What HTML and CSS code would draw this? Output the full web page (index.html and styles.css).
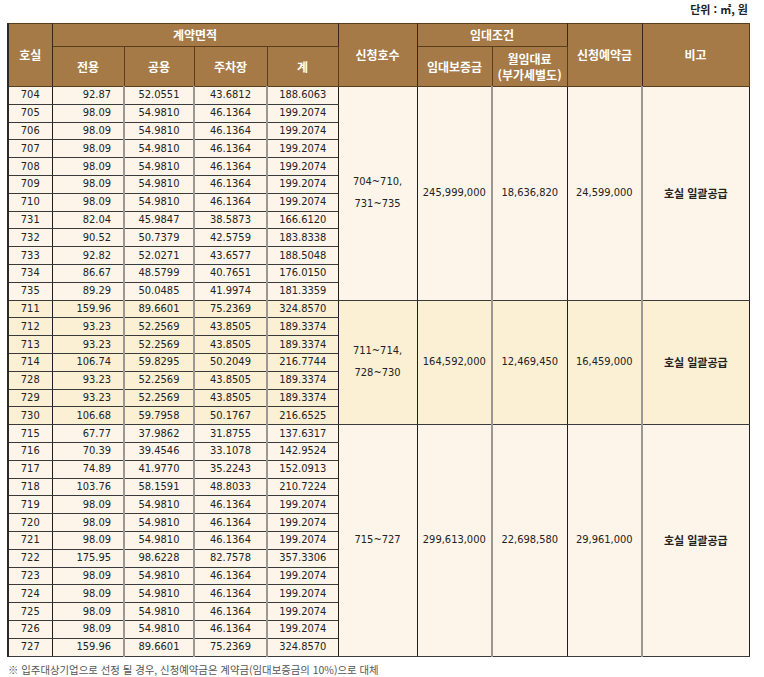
FILE: index.html
```html
<!DOCTYPE html>
<html lang="ko">
<head>
<meta charset="utf-8">
<link rel="stylesheet" href="styles.css">
</head>
<body>
<div class="page">
  <div class="unit">단위 : ㎡, 원</div>
  <table class="tbl">
    <colgroup>
      <col class="w-ho"><col class="w-a"><col class="w-b"><col class="w-c"><col class="w-d">
      <col class="w-e"><col class="w-f"><col class="w-g"><col class="w-h"><col class="w-i">
    </colgroup>
    <thead>
      <tr class="h1">
        <th rowspan="2" class="bk">호실</th>
        <th colspan="4" class="bk">계약면적</th>
        <th rowspan="2" class="bk">신청호수</th>
        <th colspan="2" class="bk">임대조건</th>
        <th rowspan="2" class="bk">신청예약금</th>
        <th rowspan="2">비고</th>
      </tr>
      <tr class="h2">
        <th>전용</th><th>공용</th><th>주차장</th><th class="bk">계</th>
        <th>임대보증금</th><th class="bk">월임대료<br>(부가세별도)</th>
      </tr>
    </thead>
    <tbody class="g1">
      <tr><td class="ho">704</td><td class="ex">92.87</td><td class="gr">52.0551</td><td class="gr">43.6812</td><td>188.6063</td>
        <td rowspan="12" class="m bk">704~710,<br>731~735</td><td rowspan="12" class="m gr">245,999,000</td><td rowspan="12" class="m bk">18,636,820</td><td rowspan="12" class="m gr">24,599,000</td><td rowspan="12" class="m note">호실 일괄공급</td></tr>
      <tr><td class="ho">705</td><td class="ex">98.09</td><td class="gr">54.9810</td><td class="gr">46.1364</td><td>199.2074</td></tr>
      <tr><td class="ho">706</td><td class="ex">98.09</td><td class="gr">54.9810</td><td class="gr">46.1364</td><td>199.2074</td></tr>
      <tr><td class="ho">707</td><td class="ex">98.09</td><td class="gr">54.9810</td><td class="gr">46.1364</td><td>199.2074</td></tr>
      <tr><td class="ho">708</td><td class="ex">98.09</td><td class="gr">54.9810</td><td class="gr">46.1364</td><td>199.2074</td></tr>
      <tr><td class="ho">709</td><td class="ex">98.09</td><td class="gr">54.9810</td><td class="gr">46.1364</td><td>199.2074</td></tr>
      <tr><td class="ho">710</td><td class="ex">98.09</td><td class="gr">54.9810</td><td class="gr">46.1364</td><td>199.2074</td></tr>
      <tr><td class="ho">731</td><td class="ex">82.04</td><td class="gr">45.9847</td><td class="gr">38.5873</td><td>166.6120</td></tr>
      <tr><td class="ho">732</td><td class="ex">90.52</td><td class="gr">50.7379</td><td class="gr">42.5759</td><td>183.8338</td></tr>
      <tr><td class="ho">733</td><td class="ex">92.82</td><td class="gr">52.0271</td><td class="gr">43.6577</td><td>188.5048</td></tr>
      <tr><td class="ho">734</td><td class="ex">86.67</td><td class="gr">48.5799</td><td class="gr">40.7651</td><td>176.0150</td></tr>
      <tr><td class="ho">735</td><td class="ex">89.29</td><td class="gr">50.0485</td><td class="gr">41.9974</td><td>181.3359</td></tr>
    </tbody>
    <tbody class="g2">
      <tr><td class="ho">711</td><td class="ex">159.96</td><td class="gr">89.6601</td><td class="gr">75.2369</td><td>324.8570</td>
        <td rowspan="7" class="m bk">711~714,<br>728~730</td><td rowspan="7" class="m gr">164,592,000</td><td rowspan="7" class="m bk">12,469,450</td><td rowspan="7" class="m gr">16,459,000</td><td rowspan="7" class="m note">호실 일괄공급</td></tr>
      <tr><td class="ho">712</td><td class="ex">93.23</td><td class="gr">52.2569</td><td class="gr">43.8505</td><td>189.3374</td></tr>
      <tr><td class="ho">713</td><td class="ex">93.23</td><td class="gr">52.2569</td><td class="gr">43.8505</td><td>189.3374</td></tr>
      <tr><td class="ho">714</td><td class="ex">106.74</td><td class="gr">59.8295</td><td class="gr">50.2049</td><td>216.7744</td></tr>
      <tr><td class="ho">728</td><td class="ex">93.23</td><td class="gr">52.2569</td><td class="gr">43.8505</td><td>189.3374</td></tr>
      <tr><td class="ho">729</td><td class="ex">93.23</td><td class="gr">52.2569</td><td class="gr">43.8505</td><td>189.3374</td></tr>
      <tr><td class="ho">730</td><td class="ex">106.68</td><td class="gr">59.7958</td><td class="gr">50.1767</td><td>216.6525</td></tr>
    </tbody>
    <tbody class="g1">
      <tr><td class="ho">715</td><td class="ex">67.77</td><td class="gr">37.9862</td><td class="gr">31.8755</td><td>137.6317</td>
        <td rowspan="13" class="m bk">715~727</td><td rowspan="13" class="m gr">299,613,000</td><td rowspan="13" class="m bk">22,698,580</td><td rowspan="13" class="m gr">29,961,000</td><td rowspan="13" class="m note">호실 일괄공급</td></tr>
      <tr><td class="ho">716</td><td class="ex">70.39</td><td class="gr">39.4546</td><td class="gr">33.1078</td><td>142.9524</td></tr>
      <tr><td class="ho">717</td><td class="ex">74.89</td><td class="gr">41.9770</td><td class="gr">35.2243</td><td>152.0913</td></tr>
      <tr><td class="ho">718</td><td class="ex">103.76</td><td class="gr">58.1591</td><td class="gr">48.8033</td><td>210.7224</td></tr>
      <tr><td class="ho">719</td><td class="ex">98.09</td><td class="gr">54.9810</td><td class="gr">46.1364</td><td>199.2074</td></tr>
      <tr><td class="ho">720</td><td class="ex">98.09</td><td class="gr">54.9810</td><td class="gr">46.1364</td><td>199.2074</td></tr>
      <tr><td class="ho">721</td><td class="ex">98.09</td><td class="gr">54.9810</td><td class="gr">46.1364</td><td>199.2074</td></tr>
      <tr><td class="ho">722</td><td class="ex">175.95</td><td class="gr">98.6228</td><td class="gr">82.7578</td><td>357.3306</td></tr>
      <tr><td class="ho">723</td><td class="ex">98.09</td><td class="gr">54.9810</td><td class="gr">46.1364</td><td>199.2074</td></tr>
      <tr><td class="ho">724</td><td class="ex">98.09</td><td class="gr">54.9810</td><td class="gr">46.1364</td><td>199.2074</td></tr>
      <tr><td class="ho">725</td><td class="ex">98.09</td><td class="gr">54.9810</td><td class="gr">46.1364</td><td>199.2074</td></tr>
      <tr><td class="ho">726</td><td class="ex">98.09</td><td class="gr">54.9810</td><td class="gr">46.1364</td><td>199.2074</td></tr>
      <tr><td class="ho">727</td><td class="ex">159.96</td><td class="gr">89.6601</td><td class="gr">75.2369</td><td>324.8570</td></tr>
    </tbody>
  </table>
  <p class="foot">※ 입주대상기업으로 선정 될 경우, 신청예약금은 계약금(임대보증금의 10%)으로 대체</p>
</div>
</body>
</html>
```

FILE: styles.css
```css
html, body {
  margin: 0;
  padding: 0;
  background: #ffffff;
}
.page {
  width: 741px;
  padding-left: 7px;
  font-family: "DejaVu Sans Condensed", "Noto Sans CJK KR", sans-serif;
  color: #222;
}
.unit {
  height: 23px;
  box-sizing: border-box;
  padding-top: 1px;
  text-align: right;
  font-family: "Noto Sans CJK KR", sans-serif;
  font-size: 11px;
  font-weight: 700;
  line-height: 16px;
  color: #222;
}
.tbl {
  width: 741px;
  border-collapse: collapse;
  table-layout: fixed;
  border: 1px solid #1f1f1f;
  border-left: 2px solid #2a2a2a;
}
.w-ho { width: 44px; }
.w-a { width: 72px; }
.w-b { width: 70px; }
.w-c { width: 73px; }
.w-d { width: 71px; }
.w-e { width: 79px; }
.w-f { width: 75px; }
.w-g { width: 75px; }
.w-h { width: 75px; }
.w-i { width: 107px; }

.tbl th {
  background: #a67a46;
  color: #ffffff;
  font-family: "Noto Sans CJK KR", sans-serif;
  font-size: 12px;
  font-weight: 700;
  line-height: 16px;
  border: 1px solid #5a3d1c;
  padding: 0;
  text-align: center;
  vertical-align: middle;
}
.tbl th.bk {
  border-right: 1px solid #3c2812;
}
.h1 { height: 23px; }
.h2 { height: 40px; }
.h2 th { line-height: 16px; }

.tbl td {
  font-size: 11px;
  line-height: 14px;
  padding: 0;
  text-align: center;
  vertical-align: middle;
  border-top: 1px solid #3a3a3a;
  border-bottom: 1px solid #3a3a3a;
  border-left: 1px solid #1f1f1f;
  border-right: 1px solid #1f1f1f;
  color: #222;
  white-space: nowrap;
}
.tbl tbody tr { height: 17.8px; }
.tbl td.ex {
  text-align: right;
  padding-right: 12px;
  border-right: 2px solid #9c9891;
}
.tbl td.gr {
  border-right: 2px solid #9c9891;
}
.tbl td.m {
  line-height: 22px;
  font-size: 11px;
}
.tbl td.note {
  font-family: "Noto Sans CJK KR", sans-serif;
  font-weight: 700;
  font-size: 11px;
  color: #222;
}
.g1 td { background: #fdf5ea; }
.g2 td { background: #fbefd4; }
.tbl tbody + tbody tr:first-child td {
  border-top: 1px solid #111;
}
.foot {
  margin: 6px 0 0 1px;
  font-family: "Noto Sans CJK KR", sans-serif;
  font-size: 10.4px;
  line-height: 14px;
  color: #555;
}
```
